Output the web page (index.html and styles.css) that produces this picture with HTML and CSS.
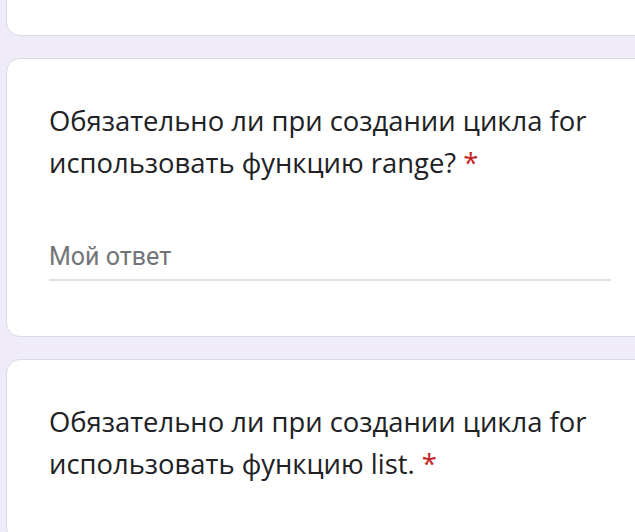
FILE: index.html
```html
<!DOCTYPE html>
<html lang="ru">
<head>
  <meta charset="UTF-8" />
  <meta name="viewport" content="width=device-width, initial-scale=1.0"/>
  <title>Форма</title>
  <link rel="stylesheet" href="styles.css">
</head>
<body>
  <div class="card card-prev"></div>

  <div class="card">
    <div class="question">Обязательно ли при создании цикла for использовать функцию range?&nbsp;<span class="required">*</span></div>
    <div class="answer">Мой ответ</div>
  </div>

  <div class="card">
    <div class="question">Обязательно ли при создании цикла for использовать функцию list.&nbsp;<span class="required">*</span></div>
  </div>
</body>
</html>
```

FILE: styles.css
```css
:root {
  --bg-color: #efebf8;
  --card-bg: #ffffff;
  --border: #dcdae2;
  --text-color: #202124;
  --hint-color: #727578;
  --required: #c5221f;
}

* {
  box-sizing: border-box;
}

body {
  margin: 0;
  padding: 0 0 0 6px;
  background: var(--bg-color);
  overflow: hidden;
  height: 532px;
}

.card {
  width: 660px;
  background: var(--card-bg);
  border: 1px solid var(--border);
  border-radius: 14px;
  padding: 41px 43px 55px 42px;
  margin-bottom: 22px;
}

.card-prev {
  height: 100px;
  margin-top: -64px;
  padding: 0;
}

.question {
  font-family: 'Open Sans', sans-serif;
  font-size: 27.4px;
  line-height: 42px;
  color: var(--text-color);
  width: 562px;
}

.required {
  color: var(--required);
}

.answer {
  margin-top: 58px;
  width: 562px;
  font-family: Roboto, sans-serif;
  font-size: 25px;
  line-height: 30px;
  color: var(--hint-color);
  padding-bottom: 7px;
  border-bottom: 2px solid #dfdfe1;
}
```
